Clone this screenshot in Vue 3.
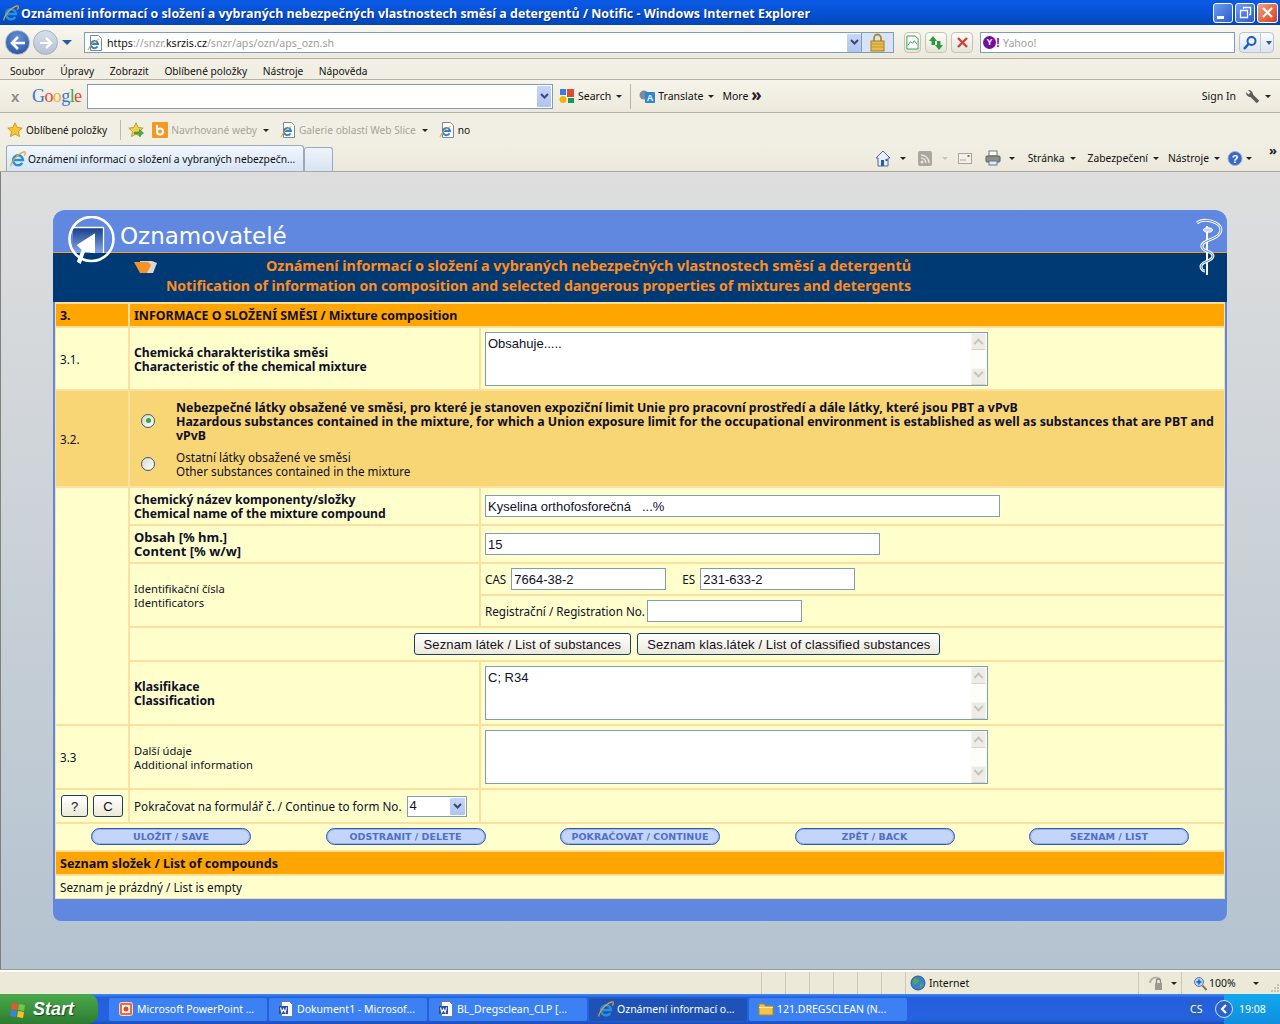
<script setup>
const menus = ['Soubor', 'Úpravy', 'Zobrazit', 'Oblíbené položky', 'Nástroje', 'Nápověda']
const actions = ['ULOŽIT / SAVE', 'ODSTRANIT / DELETE', 'POKRAČOVAT / CONTINUE', 'ZPĚT / BACK', 'SEZNAM / LIST']
const tasks = [
  { icon: 'ppt', text: 'Microsoft PowerPoint ...' },
  { icon: 'word', text: 'Dokument1 - Microsof...' },
  { icon: 'word', text: 'BL_Dregsclean_CLP [...' },
  { icon: 'ie', text: 'Oznámení informací o...', active: true },
  { icon: 'folder', text: '121.DREGSCLEAN (N...' }
]
const statusCells = [1, 2, 3, 4, 5, 6]
</script>

<template>
  <div class="window">
    <svg class="sprite" aria-hidden="true">
      <defs>
        <linearGradient id="logoFill" x1="0" y1="0" x2="0" y2="1">
          <stop offset="0" stop-color="#173f88" />
          <stop offset="1" stop-color="#86a6ea" />
        </linearGradient>
      </defs>
      <symbol id="ie" viewBox="0 0 16 16">
        <path d="M12.300 11.800A5 5 0 1 1 13 9H3.500" fill="none" stroke="#2a8fe0" stroke-width="2.400" />
        <path d="M1 15.500C0 12 8 2 14 .8c1.800-.3 1.500 2 .3 4" fill="none" stroke="#e4a52a" stroke-width="1.200" />
      </symbol>
      <symbol id="iepage" viewBox="0 0 16 16">
        <path d="M3.500.5h8l3 3v12h-11z" fill="#fff" stroke="#7a8894" />
        <path d="M10.500 11.500A3.600 3.600 0 1 1 11 9H4" fill="none" stroke="#2a80d8" stroke-width="1.900" />
        <path d="M1 15C3 11 7 6 11.500 4.500" fill="none" stroke="#e4a52a" stroke-width="1.100" />
      </symbol>
      <symbol id="star" viewBox="0 0 16 16">
        <path d="M8 .8l2.200 4.700 5 .6-3.700 3.400 1 5L8 12l-4.500 2.500 1-5L.8 6.100l5-.6z" fill="#fbc531" stroke="#c98a12" stroke-width=".8" />
      </symbol>
      <symbol id="staradd" viewBox="0 0 16 16">
        <path d="M8 .8l2.200 4.700 5 .6-3.700 3.400 1 5L8 12l-4.500 2.500 1-5L.8 6.100l5-.6z" fill="#f4d050" stroke="#a89020" stroke-width=".8" />
        <path d="M6.500 10h5V7.500l4 3.500-4 3.500V12h-5z" fill="#4cb04a" stroke="#2a7a30" stroke-width=".5" />
      </symbol>
      <symbol id="word" viewBox="0 0 16 16">
        <path d="M3.500.5h8l3 3v12h-11z" fill="#f4f6fa" stroke="#6a7a92" />
        <rect x="1" y="5" width="9" height="8" fill="#2a4f9c" />
        <path d="M2.500 6.500l1.300 5 1.700-3.500 1.700 3.500 1.300-5" fill="none" stroke="#fff" stroke-width="1.100" />
      </symbol>
      <symbol id="ppt" viewBox="0 0 16 16">
        <rect x="1.500" y="1.500" width="13" height="13" rx="2" fill="#f06a3c" stroke="#fbd2c0" />
        <rect x="4" y="4" width="8" height="8" fill="#fff" />
        <circle cx="8" cy="8" r="2.500" fill="#e0482a" />
      </symbol>
      <symbol id="folder" viewBox="0 0 16 16">
        <path d="M1 3h5l1.500 2H15v9H1z" fill="#f2c54a" stroke="#b08618" />
        <path d="M1 6.500h14" stroke="#fbe9a6" />
      </symbol>
    </svg>

    <header class="titlebar">
      <svg class="ico16"><use href="#ie" /></svg>
      <span class="title-text">Oznámení informací o složení a vybraných nebezpečných vlastnostech směsí a detergentů / Notific - Windows Internet Explorer</span>
      <div class="win-btns">
        <button class="win-btn"><span class="glyph-min"></span></button>
        <button class="win-btn">
          <svg width="13" height="13" viewBox="0 0 13 13"><path d="M4.500 3V1.500h7v7H10M1.500 4.500h7v7h-7z" fill="none" stroke="#fff" stroke-width="1.300" /></svg>
        </button>
        <button class="win-btn close">
          <svg width="13" height="13" viewBox="0 0 13 13"><path d="M2 2l9 9M11 2l-9 9" stroke="#fff" stroke-width="2.200" /></svg>
        </button>
      </div>
    </header>

    <div class="addressbar bar">
      <div class="nav-round back">
        <svg width="16" height="14" viewBox="0 0 16 14"><path d="M8 1L2 7l6 6M2.500 7H15" fill="none" stroke="#fff" stroke-width="2.600" /></svg>
      </div>
      <div class="nav-round forward">
        <svg width="14" height="12" viewBox="0 0 16 14"><path d="M8 1l6 6-6 6M13.500 7H1" fill="none" stroke="#fff" stroke-width="2.600" /></svg>
      </div>
      <span class="arrow-blue nav-arrow"></span>
      <div class="address-box">
        <svg class="ico16 addr-ico"><use href="#iepage" /></svg>
        <span class="url"><b>https</b>://snzr.<b>ksrzis.cz</b>/snzr/aps/ozn/aps_ozn.sh</span>
        <span class="combo-btn">
          <svg width="9" height="7" viewBox="0 0 9 7"><path d="M1 1l3.500 3.500L8 1" fill="none" stroke="#3a4a70" stroke-width="2" /></svg>
        </span>
        <span class="lock-cell">
          <svg width="15" height="19" viewBox="0 0 15 19"><path d="M4 9V5a3.500 3.500 0 017 0v4" fill="none" stroke="#b08a2a" stroke-width="1.800" /><rect x="1" y="8" width="13" height="10" fill="#e8bc4a" stroke="#a07c20" /><path d="M1 11h13M1 14h13" stroke="#c49a30" /></svg>
        </span>
      </div>
      <span class="tool-btn first">
        <svg width="13" height="15" viewBox="0 0 14 16"><path d="M1 1h9l3 3v11H1z" fill="#fff" stroke="#2f9a4a" /><path d="M2 11l3-4 2 2 2-3 3 4" fill="none" stroke="#2f9a4a" /></svg>
      </span>
      <span class="tool-btn">
        <svg width="16" height="16" viewBox="0 0 16 16"><path d="M5 1L1 6h2.500v4H7V6h2zM11 15l4-5h-2.500V6H9v4H7z" fill="#2c9a3c" /></svg>
      </span>
      <span class="tool-btn">
        <svg width="13" height="13" viewBox="0 0 13 13"><path d="M2 2l9 9M11 2l-9 9" stroke="#c8403c" stroke-width="2.400" /></svg>
      </span>
      <div class="search-box">
        <span class="yahoo"><i>Y</i>!</span><span class="yahoo-text">Yahoo!</span>
      </div>
      <span class="search-btn">
        <svg width="16" height="16" viewBox="0 0 16 16"><circle cx="9.500" cy="6" r="4" fill="none" stroke="#1c5ad0" stroke-width="2" /><path d="M6.500 9L2 14" stroke="#1c5ad0" stroke-width="2.600" /></svg>
        <i></i>
        <span class="arrow-blue small"></span>
      </span>
    </div>

    <nav class="menubar bar">
      <span v-for="m in menus" :key="m">{{ m }}</span>
    </nav>

    <div class="googlebar bar">
      <span class="g-close">x</span>
      <span class="g-logo"><b class="c1">G</b><b class="c2">o</b><b class="c3">o</b><b class="c1">g</b><b class="c4">l</b><b class="c2">e</b></span>
      <div class="g-input">
        <span class="combo-btn">
          <svg width="9" height="7" viewBox="0 0 9 7"><path d="M1 1l3.500 3.500L8 1" fill="none" stroke="#3a4a70" stroke-width="2" /></svg>
        </span>
      </div>
      <svg class="g-search" width="16" height="16" viewBox="0 0 16 16">
        <rect x="1" y="1" width="6" height="6" fill="#3b78e7" /><rect x="8" y="1" width="7" height="8" fill="#dd4b39" /><circle cx="4" cy="11.500" r="3.500" fill="#f4b400" /><rect x="9" y="10" width="6" height="5" fill="#0f9d58" />
      </svg>
      <span>Search</span>
      <span class="drop g-drop1"></span>
      <span class="g-sep"></span>
      <svg class="g-trans" width="16" height="15" viewBox="0 0 16 15">
        <circle cx="5" cy="6" r="4.500" fill="#7c8c9c" /><rect x="6" y="3" width="10" height="11" rx="1" fill="#2f86d0" /><text x="11" y="12" font-size="9" font-weight="700" font-family="Liberation Sans" fill="#fff" text-anchor="middle">A</text>
      </svg>
      <span>Translate</span>
      <span class="drop g-drop2"></span>
      <span class="g-more">More</span>
      <span class="chev">»</span>
      <span class="g-signin">Sign In</span>
      <svg class="g-wrench" width="15" height="15" viewBox="0 0 15 15">
        <path d="M5 5l8 8" stroke="#5c5c58" stroke-width="3.500" />
        <path d="M1 3a4.500 4.500 0 005 5l2-2.500A4.500 4.500 0 003 1l2.500 2.500L3.500 5.500z" fill="#5c5c58" />
      </svg>
      <span class="drop g-drop3"></span>
    </div>

    <div class="favbar bar">
      <svg class="ico16 fav-star"><use href="#star" /></svg>
      <span class="fav-label">Oblíbené položky</span>
      <span class="fav-sep"></span>
      <svg class="ico16"><use href="#staradd" /></svg>
      <svg class="fav-b" width="16" height="16" viewBox="0 0 16 16"><rect width="16" height="16" rx="1" fill="#f49a22" /><path d="M5 3v7" stroke="#fff" stroke-width="2" /><circle cx="8" cy="9.500" r="3" fill="none" stroke="#fff" stroke-width="2" /></svg>
      <span class="muted">Navrhované weby</span>
      <span class="drop fav-d1"></span>
      <svg class="ico16 fav-g"><use href="#iepage" /></svg>
      <span class="muted">Galerie oblastí Web Slice</span>
      <span class="drop fav-d1"></span>
      <svg class="ico16 fav-g"><use href="#iepage" /></svg>
      <span class="fav-no">no</span>
    </div>

    <div class="tabbar">
      <div class="tab active">
        <svg class="ico16"><use href="#ie" /></svg>
        <span>Oznámení informací o složení a vybraných nebezpečn...</span>
      </div>
      <div class="tab new"></div>
      <div class="cmds">
        <svg class="cmd-home" width="16" height="17" viewBox="0 0 16 17"><path d="M8 1L1 8h2v8h10V8h2z" fill="#e8eef6" stroke="#4c6a9c" /><rect x="6" y="10" width="3" height="6" fill="#2a5aa8" /><rect x="10.500" y="9" width="2" height="2" fill="#2a5aa8" /></svg>
        <span class="drop cmd-d1"></span>
        <svg class="cmd-rss" width="14" height="15" viewBox="0 0 14 15"><rect width="14" height="15" rx="2" fill="#a9a79e" /><circle cx="4" cy="11" r="1.500" fill="#e8e6dc" /><path d="M3 7a5 5 0 015 5M3 4a8 8 0 018 8" fill="none" stroke="#e8e6dc" stroke-width="1.400" /></svg>
        <span class="drop faint cmd-d2"></span>
        <svg class="cmd-mail" width="14" height="11" viewBox="0 0 14 11"><rect x=".5" y=".5" width="13" height="10" fill="#f2f0e8" stroke="#a8a69c" /><rect x="9.500" y="2" width="2" height="2" fill="#d05050" /><path d="M2 7h6" stroke="#a8a69c" /></svg>
        <svg class="cmd-print" width="16" height="16" viewBox="0 0 16 16"><rect x="4" y="1" width="8" height="5" fill="#fff" stroke="#767672" /><rect x="1" y="6" width="14" height="6" rx="1" fill="#8e8e8a" stroke="#5e5e5a" /><rect x="4" y="11" width="8" height="4" fill="#dfe9f2" stroke="#5a7c9c" /></svg>
        <span class="drop cmd-d3"></span>
        <span class="cmd-item cmd-page">Stránka</span><span class="drop"></span>
        <span class="cmd-item cmd-sec">Zabezpečení</span><span class="drop"></span>
        <span class="cmd-item cmd-tools">Nástroje</span><span class="drop"></span>
        <svg class="cmd-help" width="16" height="17" viewBox="0 0 16 17"><circle cx="8" cy="8.500" r="7" fill="#3a68c4" stroke="#9cb2d8" /><text x="8" y="13" font-size="11" font-weight="700" font-family="Liberation Sans" fill="#fff" text-anchor="middle">?</text></svg>
        <span class="drop cmd-d4"></span>
        <span class="cmd-chev">»</span>
      </div>
    </div>

    <main class="content">
      <section class="card">
        <div class="card-top">
          <svg class="logo" width="50" height="50" viewBox="0 0 50 50">
            <rect x="6" y="12" width="30" height="25" fill="url(#logoFill)" />
            <path d="M6 11.500h30.500V37" fill="none" stroke="#fff" stroke-width="1.300" />
            <circle cx="24.500" cy="23" r="22" fill="none" stroke="#fff" stroke-width="2.600" />
            <path d="M28 17.300L9.700 29l5 5-5 11.700 4 2.300 4.300-12.300 10 1.600z" fill="#fff" />
          </svg>
          <h1>Oznamovatelé</h1>
          <svg class="snake" width="27" height="58" viewBox="0 0 27 58">
            <path d="M11 8v49" stroke="#fff" stroke-width="2" />
            <path d="M1 5C6 1 14 2 20 5c7 4 6 10 0 14-8 4-15 5-14 10 1 5 11 4 11 9s-11 5-12 10c0 3 2 5 4 5" fill="none" stroke="#fff" stroke-width="3" />
            <path d="M1 5C6 1 14 2 20 5c7 4 6 10 0 14-8 4-15 5-14 10 1 5 11 4 11 9s-11 5-12 10c0 3 2 5 4 5" fill="none" stroke="#5a80d8" stroke-width="1" />
            <ellipse cx="12" cy="12" rx="4.500" ry="2.200" fill="#c8d8f4" stroke="#fff" />
          </svg>
        </div>
        <div class="card-band">
          <svg class="band-folder" width="24" height="13" viewBox="0 0 24 13">
            <path d="M6 1h12l5 2-4 10H8z" fill="#d8d8d0" />
            <path d="M0 2h14l3 3-4 8H6z" fill="#f49228" />
          </svg>
          <p class="band-cz">Oznámení informací o složení a vybraných nebezpečných vlastnostech směsí a detergentů</p>
          <p>Notification of information on composition and selected dangerous properties of mixtures and detergents</p>
        </div>

        <div class="form-grid">
          <div class="cell head">3.</div>
          <div class="cell head span2">INFORMACE O SLOŽENÍ SMĚSI / Mixture composition</div>

          <div class="cell">3.1.</div>
          <div class="cell strong">Chemická charakteristika směsi<br />Characteristic of the chemical mixture</div>
          <div class="cell field">
            <div class="area"><div class="area-text">Obsahuje.....</div><div class="scroll"><span class="sb up"></span><span class="sb down"></span></div></div>
          </div>

          <div class="cell gold">3.2.</div>
          <div class="cell gold span2 choices">
            <div class="choice strong">
              <span class="radio on"></span>
              <div>Nebezpečné látky obsažené ve směsi, pro které je stanoven expoziční limit Unie pro pracovní prostředí a dále látky, které jsou PBT a vPvB<br />Hazardous substances contained in the mixture, for which a Union exposure limit for the occupational environment is established as well as substances that are PBT and<br />vPvB</div>
            </div>
            <div class="choice">
              <span class="radio"></span>
              <div>Ostatní látky obsažené ve směsi<br />Other substances contained in the mixture</div>
            </div>
          </div>

          <div class="cell blank"></div>
          <div class="cell strong">Chemický název komponenty/složky<br />Chemical name of the mixture compound</div>
          <div class="cell field"><input class="txt w515" readonly value="Kyselina orthofosforečná   ...%" /></div>

          <div class="cell strong wide">Obsah [% hm.]<br />Content [% w/w]</div>
          <div class="cell field"><input class="txt w395" readonly value="15" /></div>

          <div class="cell identifiers narrow">Identifikační čísla<br />Identificators</div>
          <div class="cell field">
            <span class="lbl">CAS</span><input class="txt w155" readonly value="7664-38-2" />
            <span class="lbl lbl-es">ES</span><input class="txt w155" readonly value="231-633-2" />
          </div>
          <div class="cell field">
            <span class="lbl lbl-reg">Registrační / Registration No.</span><input class="txt w155" readonly value="" />
          </div>

          <div class="cell span2 btn-row">
            <button class="btn">Seznam látek / List of substances</button>
            <button class="btn">Seznam klas.látek / List of classified substances</button>
          </div>

          <div class="cell strong">Klasifikace<br />Classification</div>
          <div class="cell field">
            <div class="area"><div class="area-text">C; R34</div><div class="scroll"><span class="sb up"></span><span class="sb down"></span></div></div>
          </div>

          <div class="cell">3.3</div>
          <div class="cell narrow">Další údaje<br />Additional information</div>
          <div class="cell field">
            <div class="area"><div class="area-text"></div><div class="scroll"><span class="sb up"></span><span class="sb down"></span></div></div>
          </div>

          <div class="cell small-btns">
            <button class="btn q">?</button>
            <button class="btn c">C</button>
          </div>
          <div class="cell continue">
            <span>Pokračovat na formulář č. / Continue to form No.</span>
            <div class="select">
              <span>4</span>
              <span class="combo-btn">
                <svg width="9" height="7" viewBox="0 0 9 7"><path d="M1 1l3.500 3.500L8 1" fill="none" stroke="#3a4a70" stroke-width="2" /></svg>
              </span>
            </div>
          </div>
          <div class="cell"></div>

          <div class="cell span3 actions">
            <button v-for="a in actions" :key="a" class="pill">{{ a }}</button>
          </div>
          <div class="cell head span3 list-head">Seznam složek / List of compounds</div>
          <div class="cell span3">Seznam je prázdný / List is empty</div>
        </div>
        <div class="card-foot"></div>
      </section>
    </main>

    <footer class="statusbar">
      <span class="st-spacer"></span>
      <span v-for="n in statusCells" :key="n" class="st-cell"></span>
      <span class="st-zone">
        <svg width="16" height="16" viewBox="0 0 16 16"><circle cx="8" cy="8" r="7" fill="#3f7fd0" stroke="#2a5a9c" /><path d="M4 3c2 1 4 0 5 2s-2 2-3 4-2 0-3-2zM10 9c2-1 3 0 3 2l-3 2z" fill="#4fae4a" /></svg>
        <span>Internet</span>
      </span>
      <span class="st-prot">
        <svg width="16" height="16" viewBox="0 0 16 16"><path d="M2 8a6 6 0 0110-4" fill="none" stroke="#b4b2a8" stroke-width="2" /><rect x="7" y="8" width="7" height="7" fill="#9c9a92" /><path d="M8.500 8V6a2 2 0 014 0v2" fill="none" stroke="#8c8a82" stroke-width="1.300" /></svg>
        <span class="drop"></span>
      </span>
      <span class="st-zoom">
        <svg width="14" height="15" viewBox="0 0 14 15"><circle cx="6" cy="6" r="4.500" fill="#b6d0f2" stroke="#5c7ca8" /><path d="M3.500 6h5M6 3.500v5" stroke="#1f5ab8" stroke-width="1.500" /><path d="M9.500 9.500l4 4.500" stroke="#8a7a50" stroke-width="2" /></svg>
        <span>100%</span>
        <span class="drop st-zoom-d"></span>
        <svg class="grip" width="11" height="11" viewBox="0 0 11 11"><path d="M8 1h2v2H8zM5 4h2v2H5zM8 4h2v2H8zM2 7h2v2H2zM5 7h2v2H5zM8 7h2v2H8z" fill="#c4c2b4" /></svg>
      </span>
    </footer>

    <div class="taskbar">
      <div class="start">
        <svg width="19" height="19" viewBox="0 0 19 19">
          <path d="M3 3l6 1-1 6-6-1z" fill="#e8572c" /><path d="M10 4l6 1-1 6-6-1z" fill="#7cc242" /><path d="M2 10l6 1-1 6-6-1z" fill="#3f7fe0" /><path d="M9 11l6 1-1 6-6-1z" fill="#f6c02c" />
        </svg>
        <span>Start</span>
      </div>
      <div class="tasks">
        <div v-for="t in tasks" :key="t.text" class="task" :class="{ active: t.active }">
          <svg class="ico16"><use :href="'#' + t.icon" /></svg>
          <span>{{ t.text }}</span>
        </div>
      </div>
      <span class="lang">CS</span>
      <div class="tray">
        <span class="tray-chev">
          <svg width="8" height="10" viewBox="0 0 8 10"><path d="M6 1L2 5l4 4" fill="none" stroke="#fff" stroke-width="2.200" /></svg>
        </span>
        <span>19:08</span>
      </div>
    </div>
  </div>
</template>

<style>
html, body { margin: 0; background: #ece9d8; }
</style>

<style scoped>
.window {
  width: 1280px;
  height: 1024px;
  display: flex;
  flex-direction: column;
  overflow: hidden;
  font-family: "Liberation Sans", Arial, sans-serif;
  font-size: 11px;
  color: #111;
}
.sprite { position: absolute; width: 0; height: 0; }
.ico16 { width: 16px; height: 16px; flex: none; }
button { font-family: inherit; padding: 0; cursor: default; }

/* title bar */
.titlebar {
  height: 25px;
  flex: none;
  display: flex;
  align-items: center;
  padding-left: 3px;
  box-sizing: border-box;
  background: linear-gradient(#0a5ae0 0%, #0a58e4 12%, #0350d0 60%, #0246b8 100%);
}
.title-text {
  margin: 2px 0 0 2px;
  color: #fff;
  font-family: "Open Sans", sans-serif;
  font-weight: 700;
  font-size: 12.430px;
  white-space: nowrap;
  text-shadow: 1px 1px 0 #0a2a80;
}
.win-btns { margin-left: auto; display: flex; gap: 2px; padding-right: 2px; }
.win-btn {
  width: 20px;
  height: 20px;
  display: flex;
  align-items: center;
  justify-content: center;
  border: 1px solid #fff;
  border-radius: 3px;
  background: linear-gradient(135deg, #6f9cf0, #2a5ad0);
}
.win-btn.close { background: linear-gradient(135deg, #f0a080, #d8401c); width: 21px; }
.glyph-min { width: 7px; height: 3px; background: #fff; align-self: flex-end; margin: 0 5px 3px 0; }

/* toolbars */
.bar {
  flex: none;
  box-sizing: border-box;
  display: flex;
  align-items: center;
  background: #f1efe3;
  border-bottom: 1px solid #b4b2a6;
}
.addressbar {
  height: 34px;
  padding: 2px 0 0 5px;
  background: linear-gradient(#f8f7f0, #ece9dc);
}
.nav-round {
  border-radius: 50%;
  display: flex;
  align-items: center;
  justify-content: center;
  flex: none;
  box-sizing: border-box;
  width: 25px;
  height: 25px;
}
.back { background: radial-gradient(circle at 50% 30%, #6c94d4, #1c4a9c); border: 1px solid #a8b6cc; }
.forward { margin-left: 3px; background: linear-gradient(#d6dfed, #b6c2d4); border: 1px solid #a8b0c0; }
.arrow-blue { width: 0; height: 0; border-left: 5px solid transparent; border-right: 5px solid transparent; border-top: 5px solid #2a5a9c; }
.nav-arrow { margin-left: 4px; }
.address-box {
  width: 810px;
  height: 21px;
  box-sizing: border-box;
  margin-left: 12px;
  display: flex;
  align-items: center;
  background: #fff;
  border: 1px solid #7f9db9;
  flex: none;
}
.addr-ico { margin: 0 4px 0 2px; }
.url { color: #a0a096; font-family: "Noto Sans", sans-serif; font-size: 10.650px; white-space: nowrap; }
.url b { color: #111; font-weight: 400; }
.combo-btn {
  width: 14px;
  height: 18px;
  display: flex;
  align-items: center;
  justify-content: center;
  background: linear-gradient(#c6d6f8, #aec4f0);
  border-radius: 1px;
  flex: none;
}
.address-box .combo-btn { margin-left: auto; }
.lock-cell {
  width: 31px;
  height: 19px;
  display: flex;
  justify-content: center;
  align-items: center;
  background: #d8e4f6;
  border-left: 1px solid #7f9db9;
  flex: none;
}
.tool-btn {
  width: 22px;
  height: 21px;
  box-sizing: border-box;
  margin-left: 4px;
  display: flex;
  align-items: center;
  justify-content: center;
  border: 1px solid #c6c4b8;
  border-radius: 4px;
  background: linear-gradient(#fdfdf8, #e6e4d8);
  flex: none;
}
.tool-btn.first { margin-left: 10px; width: 17px; }
.search-box {
  width: 255px;
  height: 21px;
  box-sizing: border-box;
  margin-left: 7px;
  padding-left: 2px;
  display: flex;
  align-items: center;
  gap: 3px;
  background: #fff;
  border: 1px solid #7f9db9;
  flex: none;
}
.yahoo { color: #720e9e; font-weight: 700; font-size: 12px; line-height: 1; display: flex; align-items: center; }
.yahoo i {
  width: 13px;
  height: 13px;
  border-radius: 50%;
  background: #720e9e;
  color: #fff;
  font-size: 9px;
  font-style: normal;
  line-height: 13px;
  text-align: center;
}
.yahoo-text { color: #a0a096; font-family: "Noto Sans", sans-serif; font-size: 10.500px; }
.search-btn {
  margin-left: 4px;
  width: 35px;
  height: 21px;
  box-sizing: border-box;
  display: flex;
  align-items: center;
  padding-left: 2px;
  gap: 2px;
  border: 1px solid #b6c4d8;
  border-radius: 4px;
  background: linear-gradient(#fbfcfe, #dce4f0);
}
.search-btn i { width: 1px; height: 19px; background: #c0c8d6; }
.arrow-blue.small { border-width: 4px 3px 0; margin-left: 3px; }
.menubar {
  height: 21px;
  padding: 4px 0 0 10px;
  gap: 15.600px;
  font-family: "Noto Sans", sans-serif;
  font-size: 10.200px;
}
.googlebar {
  height: 33px;
  background: linear-gradient(#f6f4ea, #ece9dc);
  font-family: "Noto Sans", sans-serif;
  font-size: 10.500px;
}
.g-close { margin-left: 11px; color: #8c8c86; font-weight: 700; font-size: 15px; font-family: "Liberation Sans", sans-serif; width: 21px; }
.g-logo { font-family: "Liberation Serif", serif; font-size: 18px; width: 55px; letter-spacing: -.6px; }
.g-logo b { font-weight: 400; }
.c1 { color: #3a74d8; } .c2 { color: #e0483c; } .c3 { color: #eab61e; } .c4 { color: #3aa850; }
.g-input {
  width: 466px;
  height: 25px;
  box-sizing: border-box;
  background: #fff;
  border: 1px solid #7f9db9;
  display: flex;
  justify-content: flex-end;
  align-items: center;
  padding-right: 1px;
}
.g-input .combo-btn { height: 21px; }
.g-search { margin: 0 3px 0 6px; }
.drop { display: inline-block; width: 0; height: 0; border-left: 3px solid transparent; border-right: 3px solid transparent; border-top: 3px solid #222; flex: none; }
.drop.faint { border-top-color: #c8c6ba; }
.g-drop1 { margin-left: 5px; }
.g-sep { width: 1px; height: 25px; background: #b8b6aa; margin: 0 8px; }
.g-trans { margin-right: 3px; }
.g-drop2 { margin-left: 5px; }
.g-more { margin-left: 8px; }
.chev { margin-left: 3px; font-size: 17px; line-height: 1; margin-top: -4px; color: #222; font-weight: 700; }
.g-signin { margin-left: auto; }
.g-wrench { margin-left: 9px; }
.g-drop3 { margin: 0 9px 0 5px; }
.favbar {
  height: 30px;
  padding-top: 4px;
  border-bottom: none;
  font-family: "Noto Sans", sans-serif;
  font-size: 10.200px;
}
.fav-star { margin-left: 7px; }
.fav-label { margin-left: 3px; font-size: 10px; }
.fav-sep { width: 1px; height: 20px; background: #bcbab0; margin: 0 7px 0 13px; }
.fav-b { margin: 0 3px 0 8px; }
.muted { color: #a4a39a; }
.fav-d1 { margin-left: 6px; }
.fav-g { margin: 0 3px 0 11px; }
.tabbar {
  height: 29px;
  flex: none;
  box-sizing: border-box;
  display: flex;
  align-items: flex-end;
  padding-left: 6px;
  background: linear-gradient(#f1efe3, #ece9dc);
  border-bottom: 1px solid #a8a89c;
  font-family: "Noto Sans", sans-serif;
  font-size: 10.300px;
}
.tab {
  box-sizing: border-box;
  border: 1px solid #9caab8;
  border-bottom: none;
  border-radius: 3px 3px 0 0;
}
.tab.active {
  width: 298px;
  height: 26px;
  display: flex;
  align-items: center;
  gap: 2px;
  padding-left: 3px;
  background: linear-gradient(#f2f7fd, #d5e4f7);
  white-space: nowrap;
  overflow: hidden;
}
.tab.new { width: 29px; height: 24px; background: linear-gradient(#eef3fa, #d8e4f4); }
.cmds { margin-left: auto; height: 100%; display: flex; align-items: center; padding-top: 2px; box-sizing: border-box; }
.cmd-d1 { margin: 0 12px 0 9px; }
.cmd-d2 { margin: 0 10px; }
.cmd-print { margin-left: 13px; }
.cmd-d3 { margin-left: 8px; }
.cmd-item { margin-right: 5px; }
.cmd-page { margin-left: 13px; }
.cmd-sec { margin-left: 12px; }
.cmd-tools { margin-left: 9px; }
.cmd-help { margin-left: 7px; }
.cmd-d4 { margin-left: 3px; }
.cmd-chev { margin: -17px 3px 0 17px; font-size: 13px; font-weight: 700; color: #222; }

/* page */
.content {
  flex: 1;
  min-height: 0;
  box-sizing: border-box;
  padding: 38px 0 0 52px;
  border-left: 1px solid #80807c;
  background: linear-gradient(#dedede, #b4c3d0);
  font-family: "Noto Sans", sans-serif;
  font-size: 11.700px;
  color: #101028;
}
.card { width: 1174px; }
.card-top {
  height: 42px;
  position: relative;
  background: #6088e0;
  border-radius: 12px 12px 0 0;
  border-bottom: 1px solid #ff9a1e;
}
.card-top h1 {
  margin: 0;
  position: absolute;
  left: 67px;
  top: 8px;
  font-family: "DejaVu Sans", sans-serif;
  font-weight: 400;
  font-size: 23px;
  line-height: 36px;
  color: #fff;
  white-space: nowrap;
}
.logo { position: absolute; left: 14px; top: 6px; z-index: 1; }
.snake { position: absolute; right: 4px; top: 8px; z-index: 1; }
.card-band {
  height: 49px;
  position: relative;
  box-sizing: border-box;
  padding: 3px 316px 0 0;
  background: #003a75;
  text-align: right;
}
.card-band p {
  margin: 0;
  color: #ff8c1e;
  font-weight: 700;
  font-size: 14.070px;
  line-height: 20px;
  white-space: nowrap;
}
.card-band .band-cz { font-size: 14.370px; }
.band-folder { position: absolute; left: 81px; top: 7px; }
.form-grid {
  display: grid;
  grid-template-columns: 72px 349px 743px;
  grid-template-rows: 22px 61px 95px 36px 36px 30px 30px 32px 62px 62px 32px 26px 22px 22px;
  gap: 2px;
  padding: 2px 1px 1px;
  margin: 0 2px;
  background: #ffdfa0;
  box-shadow: -2px 0 0 #6088e0, 2px 0 0 #6088e0;
}
.cell {
  box-sizing: border-box;
  display: flex;
  flex-direction: column;
  justify-content: center;
  padding: 0 0 0 4px;
  line-height: 14px;
  background: #ffffcc;
  min-width: 0;
  white-space: nowrap;
}
.head { background: #ffa500; font-weight: 700; font-size: 12.400px; padding-top: 2px; }
.span2 { grid-column: span 2; }
.span3 { grid-column: span 3; }
.strong { font-weight: 700; font-size: 12.200px; padding-top: 2px; }
.wide { font-size: 13px; padding-top: 0; }
.narrow { font-size: 11.200px; padding-top: 1px; }
.gold { background: #f8d575; }
.blank { grid-row: span 6; }
.identifiers { grid-row: span 2; }
.field { flex-direction: row; align-items: center; justify-content: flex-start; }
.choices { padding: 1px 0 0 11px; gap: 7px; }
.choice { display: flex; align-items: center; gap: 21px; padding: 0; }
.choice.strong { font-size: 12.350px; padding: 0; }
.radio {
  width: 14px;
  height: 14px;
  box-sizing: border-box;
  border-radius: 50%;
  border: 1px solid #40586e;
  background: linear-gradient(135deg, #d8d8d0, #fff);
  display: flex;
  align-items: center;
  justify-content: center;
  flex: none;
}
.radio.on { margin-top: -2px; }
.radio.on::after { content: ""; width: 5px; height: 5px; border-radius: 50%; background: #2fa83c; }
.area {
  width: 503px;
  height: 54px;
  box-sizing: border-box;
  display: flex;
  background: #fff;
  border: 1px solid #7f9db9;
}
.area-text {
  flex: 1;
  padding: 3px 2px;
  font-family: "Liberation Sans", sans-serif;
  font-size: 13px;
  line-height: 15px;
}
.scroll {
  width: 17px;
  display: flex;
  flex-direction: column;
  justify-content: space-between;
  background: #fdfdf9;
}
.sb {
  height: 15px;
  margin: 0 1px;
  position: relative;
  background: #eeede5;
  border: 1px solid #f6f5ef;
  border-bottom-color: #d6d5ca;
}
.sb::after {
  content: "";
  position: absolute;
  left: 3px;
  top: 3px;
  width: 7px;
  height: 7px;
  box-sizing: border-box;
  border: solid #c6c5bb;
  border-width: 2px 0 0 2px;
  transform: rotate(45deg) translate(2px, 2px);
}
.sb.down::after { transform: rotate(225deg) translate(2px, 2px); }
.txt {
  height: 22px;
  box-sizing: border-box;
  padding: 0 2px;
  border: 1px solid #7f9db9;
  background: #fff;
  outline: none;
  font-family: "Liberation Sans", sans-serif;
  font-size: 13px;
  color: #101028;
}
.w515 { width: 515px; white-space: pre; }
.w395 { width: 395px; }
.w155 { width: 155px; }
.lbl { margin-right: 5px; }
.lbl-es { margin-left: 16px; }
.lbl-reg { margin-right: 2px; }
.btn {
  box-sizing: border-box;
  height: 22px;
  border: 1px solid #1c3c68;
  border-radius: 3px;
  background: linear-gradient(#fff, #ece9d8);
  font-family: "Liberation Sans", sans-serif;
  font-size: 13px;
  color: #101028;
  white-space: nowrap;
}
.btn-row { flex-direction: row; align-items: center; justify-content: center; gap: 6px; padding: 0; }
.btn-row .btn { padding: 0 9px; letter-spacing: .12px; }
.small-btns { flex-direction: row; align-items: center; justify-content: flex-start; gap: 5px; padding: 0 0 0 5px; }
.btn.q { width: 27px; }
.btn.c { width: 30px; }
.continue { flex-direction: row; align-items: center; justify-content: flex-start; gap: 5px; }
.select {
  width: 60px;
  height: 21px;
  box-sizing: border-box;
  display: flex;
  align-items: center;
  justify-content: space-between;
  padding: 0 1px 0 2px;
  background: #fff;
  border: 1px solid #7f9db9;
  font-family: "Liberation Sans", sans-serif;
  font-size: 13px;
}
.select .combo-btn { height: 17px; width: 15px; }
.actions { flex-direction: row; align-items: center; justify-content: space-between; padding: 0 35px 2px; }
.pill {
  width: 160px;
  height: 17px;
  box-sizing: border-box;
  border: 1px solid #2a58b8;
  border-radius: 9px;
  background: #c3d5fb;
  box-shadow: inset 0 0 0 1px rgba(60, 100, 190, .3);
  color: #5070c4;
  font-family: "DejaVu Sans", sans-serif;
  font-weight: 700;
  font-size: 9.500px;
  line-height: 13px;
}
.list-head { font-size: 12.600px; }
.card-foot { height: 22px; background: #6088e0; border-radius: 0 0 8px 8px; }

/* status bar */
.statusbar {
  height: 24px;
  flex: none;
  box-sizing: border-box;
  display: flex;
  align-items: center;
  background: #ece9d8;
  border-top: 2px solid #fff;
  box-shadow: 0 -1px 0 #9c9a8c;
  font-family: "Noto Sans", sans-serif;
  font-size: 10.500px;
}
.st-spacer { width: 761px; flex: none; }
.st-cell { width: 24px; height: 100%; box-sizing: border-box; border-left: 1px solid #cac8ba; flex: none; }
.st-zone { width: 233px; height: 100%; box-sizing: border-box; padding-left: 4px; display: flex; align-items: center; gap: 3px; border-left: 1px solid #cac8ba; flex: none; }
.st-prot { width: 43px; height: 100%; box-sizing: border-box; padding-left: 9px; display: flex; align-items: center; gap: 7px; border-left: 1px solid #cac8ba; flex: none; }
.st-zoom { height: 100%; flex: 1; box-sizing: border-box; padding-left: 11px; display: flex; align-items: center; gap: 2px; border-left: 1px solid #cac8ba; }
.st-zoom-d { margin-left: 15px; }
.grip { margin-left: auto; align-self: flex-end; }

/* taskbar */
.taskbar {
  height: 30px;
  flex: none;
  display: flex;
  align-items: center;
  background: linear-gradient(#3f8cf3 0%, #245edb 12%, #2663e0 85%, #1b4cb8 100%);
  font-family: "Noto Sans", sans-serif;
  font-size: 10.500px;
  color: #fff;
}
.start {
  width: 98px;
  height: 100%;
  box-sizing: border-box;
  padding-left: 9px;
  display: flex;
  align-items: center;
  gap: 5px;
  background: linear-gradient(#4aa84c, #3c943e 50%, #2e7a32);
  border-radius: 0 10px 10px 0;
  font-family: "Liberation Sans", sans-serif;
  font-style: italic;
  font-weight: 700;
  font-size: 18px;
  text-shadow: 1px 1px 1px #1a4a1c;
}
.tasks { margin-left: 11px; display: flex; gap: 2px; }
.task {
  width: 158px;
  height: 23px;
  box-sizing: border-box;
  padding-left: 9px;
  display: flex;
  align-items: center;
  gap: 3px;
  border-radius: 2px;
  background: #3c81f3;
  white-space: nowrap;
}
.task.active { background: #1e52b7; }
.lang { margin-left: 282px; background: #2b5fc0; padding: 0 0 0 1px; }
.tray {
  margin-left: auto;
  width: 56px;
  height: 100%;
  box-sizing: border-box;
  padding-left: 15px;
  display: flex;
  align-items: center;
  position: relative;
  background: linear-gradient(#12a8ec, #0f8ee0);
}
.tray-chev {
  position: absolute;
  left: -9px;
  top: 6px;
  width: 18px;
  height: 18px;
  box-sizing: border-box;
  display: flex;
  align-items: center;
  justify-content: center;
  border-radius: 50%;
  border: 1px solid #cfe4fa;
  background: #2a62c8;
}
</style>
